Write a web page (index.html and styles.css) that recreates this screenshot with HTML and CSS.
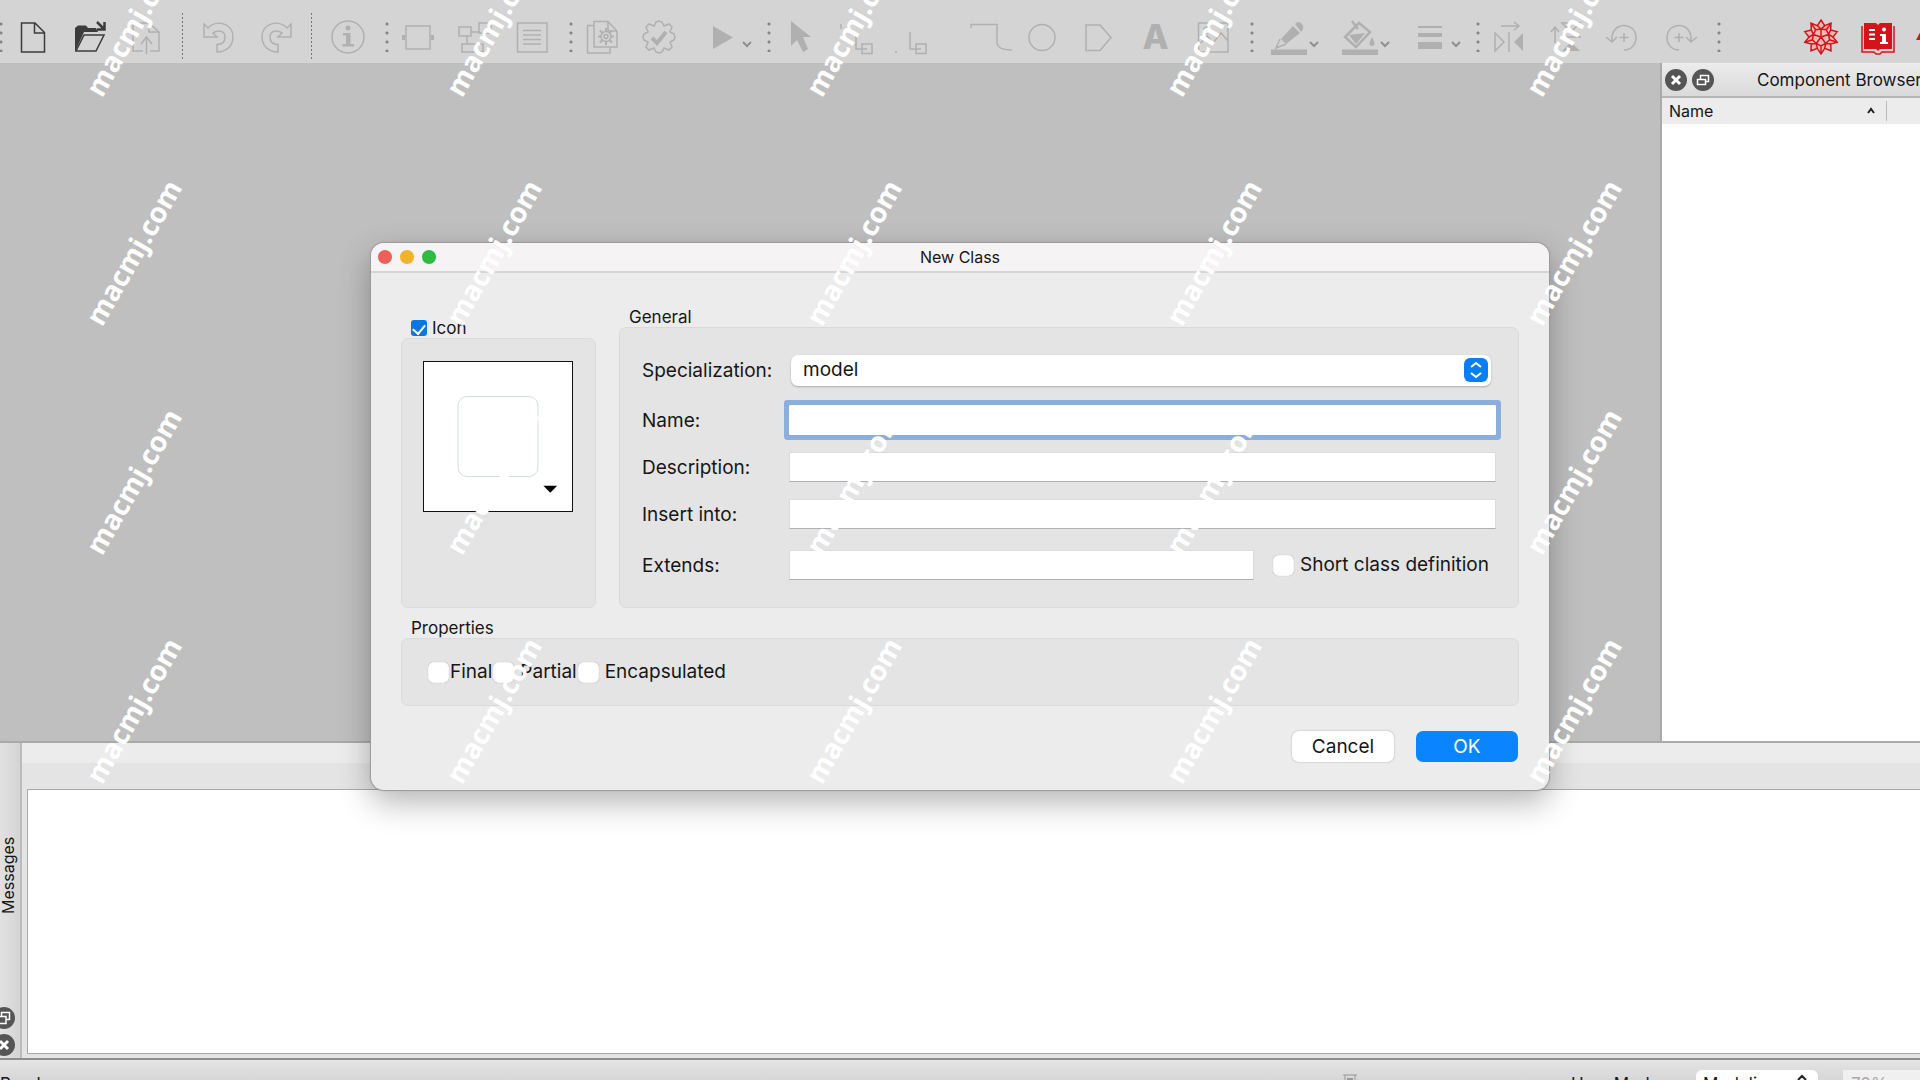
FILE: index.html
```html
<!DOCTYPE html>
<html lang="en">
<head>
<meta charset="utf-8">
<title>New Class</title>
<link rel="stylesheet" href="styles.css">
</head>
<body>
<div class="app">
  <header class="toolbar" role="toolbar">
    <span class="grip grip-first"></span>
    <button class="tool dark" aria-label="New"><svg viewBox="0 0 40 40"><path d="M8.500 6H22L31.500 15.500V35H8.500ZM21.500 6V16H31"/></svg></button>
    <button class="tool dark" aria-label="Open"><svg viewBox="0 0 40 40"><path class="fill" d="M5 35V11L8 8.500H16L18 11H26L28 15H14Z"/><path d="M14 18H34L26 34H6Z"/><path class="thick" d="M27 5L34 12M34.500 5V12.500H27"/></svg></button>
    <button class="tool" aria-label="Save"><svg viewBox="0 0 40 40"><path d="M16 34H6V6H22L32 15V34H23M22 6V15H32M19.500 37V21M14 27L19.500 20L25 27"/></svg></button>
    <span class="divider"></span>
    <button class="tool" aria-label="Undo"><svg viewBox="0 0 40 40"><path d="M5 7V20H18L14 16C18 13 26 13 26 20C26 25 23 27.500 18 27.500V35C28 35 34 28 34 20C34 6 17 2 9 11Z"/></svg></button>
    <button class="tool" aria-label="Redo"><svg viewBox="0 0 40 40"><path d="M35 7V20H22L26 16C22 13 14 13 14 20C14 25 17 27.500 22 27.500V35C12 35 6 28 6 20C6 6 23 2 31 11Z"/></svg></button>
    <span class="divider"></span>
    <button class="tool" aria-label="Information"><svg viewBox="0 0 40 40"><circle cx="20" cy="20" r="16"/><circle class="fill" cx="20" cy="11" r="2.500"/><path class="fill" d="M15 16H22.500V27H26V29.500H14.500V27H18V18.500H15Z"/></svg></button>
    <span class="grip"></span>
    <button class="tool" aria-label="Icon view"><svg viewBox="0 0 40 40"><path d="M8 9H32V32H8Z"/><path class="fill" d="M4 18H7V23H4ZM33 18H36V23H33Z"/></svg></button>
    <button class="tool" aria-label="Diagram view"><svg viewBox="0 0 40 40"><path d="M4 10H16V19H4ZM24 6H36V16H24ZM7 27H28V35H7ZM16 15H24M12 19V27"/></svg></button>
    <button class="tool" aria-label="Text view"><svg viewBox="0 0 40 40"><path d="M5.500 6H35V35H5.500ZM11 13.500H29M11 18H29M11 22.500H29M11 27H29"/></svg></button>
    <span class="grip"></span>
    <button class="tool" aria-label="Simulation"><svg viewBox="0 0 40 40"><path d="M12 4.500H26L35 14V30H12ZM26 5V14H35M12 8.500H5.500V36H28V30"/><circle cx="24" cy="19.500" r="5"/><circle cx="24" cy="19.500" r="2"/><path stroke-width="2" d="M24 11V14M24 25V28M16 19.500H19M29 19.500H32M18 13.500L20.500 16M27.500 23L30 25.500M30 13.500L27.500 16M20.500 23L18 25.500"/></svg></button>
    <button class="tool" aria-label="Validate"><svg viewBox="0 0 40 40"><path d="M20 4L23 5L25 9L30 7L33 10L31 15L35 17L36 20L35 23L31 25L33 30L30 33L25 31L23 35L20 36L17 35L15 31L10 33L7 30L9 25L5 23L4 20L5 17L9 15L7 10L10 7L15 9L17 5Z"/><path class="heavy" d="M13 21L18 26L27 15"/></svg></button>
    <button class="tool with-menu" aria-label="Simulate"><svg viewBox="0 0 40 40"><path class="fill" d="M10 9L30 20.500L10 32Z"/></svg><svg class="chev" viewBox="0 0 12 12"><path d="M2 4L6 8L10 4"/></svg></button>
    <span class="grip"></span>
    <button class="tool" aria-label="Select"><svg viewBox="0 0 40 40"><path class="fill" d="M11 4L31 20H23L28 32L23 35L17 23L11 29Z"/></svg></button>
    <button class="tool" aria-label="Connect"><svg viewBox="0 0 40 40"><path d="M4 7V12M19 15V32H30M25 27H35V36.500H25Z"/></svg></button>
    <button class="tool" aria-label="Transition"><svg viewBox="0 0 40 40"><path d="M16 15V32H27M22 27H32V36.500H22ZM2 34V36"/></svg></button>
    <button class="tool tool-group" aria-label="Line"><svg viewBox="0 0 40 40"><path d="M6 11V7.500H32V26Q33 33 47 33"/></svg></button>
    <button class="tool" aria-label="Ellipse"><svg viewBox="0 0 40 40"><circle cx="20" cy="20.500" r="13"/></svg></button>
    <button class="tool" aria-label="Polygon"><svg viewBox="0 0 40 40"><path d="M7 8H21L32 20.500L21 33.500H7Z"/></svg></button>
    <button class="tool letter" aria-label="Text">A</button>
    <button class="tool" aria-label="Image"><svg viewBox="0 0 40 40"><path d="M5.500 6H35V35H5.500ZM6 28L14 19L20 26L28 16L35 24"/><circle cx="14" cy="13" r="3"/></svg></button>
    <span class="grip"></span>
    <button class="tool with-menu" aria-label="Line color"><svg viewBox="0 0 40 40"><path class="fill" d="M1 32.500H37V38H1ZM23 9L30 16L16 27L11 22ZM25 7Q28 3 32 7Q35 11 31 15Z"/><path d="M10 22L6 31L16 27"/></svg><svg class="chev" viewBox="0 0 12 12"><path d="M2 4L6 8L10 4"/></svg></button>
    <button class="tool with-menu" aria-label="Fill color"><svg viewBox="0 0 40 40"><path class="fill" d="M1 32.500H37V38H1ZM8 18L24 16L15 27ZM31 20Q36 29 31 29Q26 29 31 20Z"/><path class="thick" d="M18 6L29 15L15 30L4 20ZM11 4L17 12"/></svg><svg class="chev" viewBox="0 0 12 12"><path d="M2 4L6 8L10 4"/></svg></button>
    <button class="tool with-menu" aria-label="Line width"><svg viewBox="0 0 40 40"><path class="fill" d="M6 9H30V11H6ZM6 16H30V20H6ZM6 25H30V32H6Z"/></svg><svg class="chev" viewBox="0 0 12 12"><path d="M2 4L6 8L10 4"/></svg></button>
    <span class="grip"></span>
    <button class="tool" aria-label="Flip horizontal"><svg viewBox="0 0 40 40"><path d="M12 9H29M25 5L30 9L25 13M6 16V34L15 25ZM20 15V35"/><path class="fill" d="M34 16V34L25 25Z"/></svg></button>
    <button class="tool" aria-label="Flip vertical"><svg viewBox="0 0 40 40"><path d="M9 26V11M5 15L9 10L13 15M16 6H34L25 15ZM15 20H35"/><path class="fill" d="M16 34H34L25 25Z"/></svg></button>
    <button class="tool" aria-label="Rotate left"><svg viewBox="0 0 40 40"><path d="M9 24C7 4 33 4 33 20.500C33 28 28 33 21 33M3 20L9 25L14 20M21 16V25M16.500 20.500H25.500"/></svg></button>
    <button class="tool" aria-label="Rotate right"><svg viewBox="0 0 40 40"><path d="M31 24C33 4 7 4 7 20.500C7 28 12 33 19 33M37 20L31 25L26 20M19 16V25M14.500 20.500H23.500"/></svg></button>
    <span class="grip"></span>
    <button class="tool brand" aria-label="Wolfram"><svg viewBox="0 0 40 40"><path class="pale" d="M20 3L23.700 8.600L30 6.200L29.700 12.900L36.200 14.700L32 20L36.200 25.300L29.700 27.100L30 33.800L23.700 31.400L20 37L16.300 31.400L10 33.800L10.300 27.100L3.800 25.300L8 20L3.800 14.700L10.300 12.900L10 6.200L16.300 8.600Z"/><path d="M16.300 8.600L20 12L23.700 8.600M29.700 12.900L27.600 17.500L32 20M29.700 27.100L24.700 26.500L23.700 31.400M16.300 31.400L15.300 26.500L10.300 27.100M8 20L12.400 17.500L10.300 12.900M20 12L25.300 12.700L27.600 17.500L28.600 22.800L24.700 26.500L20 29L15.300 26.500L11.400 22.800L12.400 17.500L14.700 12.700ZM20 20V12M20 20L27.600 17.500M20 20L24.700 26.500M20 20L15.300 26.500M20 20L12.400 17.500M25.300 12.700L30 6.200M28.600 22.800L36.200 25.300M20 29V37M11.400 22.800L3.800 25.300M14.700 12.700L10 6.200"/></svg></button>
    <button class="tool brand" aria-label="Documentation"><svg viewBox="0 0 40 40"><path class="fill" d="M6 6H18L20 8L22 6H34V32H22L20 34L18 32H6Z"/><path d="M4 9V35H16L18 37H22L24 35H36V9"/><path class="light" d="M11 13H17M11 17.500H17M11 22H17"/><path class="white" d="M22 17H28V25H30V27H22V25H24V19H22Z"/><circle class="white" cx="26" cy="12.500" r="2"/></svg></button>
    <button class="tool brand" aria-label="Support"><svg viewBox="0 0 40 40"><path class="fill" d="M8 10L1 23H12L8 34L30 16H18L24 6Z"/></svg></button>
  </header>

  <main class="workspace">
    <section class="canvas"></section>
    <aside class="browser">
      <div class="dock-title">
        <button class="round" aria-label="Close"><svg viewBox="0 0 22 22"><path class="cross" d="M7 7L15 15M15 7L7 15"/></svg></button>
        <button class="round" aria-label="Detach"><svg viewBox="0 0 22 22"><path d="M5.500 10.500H13.500V15.500H5.500ZM8.500 10V6.500H16.500V12.500H14"/></svg></button>
        <h2>Component Browser</h2>
      </div>
      <div class="columns"><span>Name</span><svg class="sort" viewBox="0 0 12 12"><path d="M3 8L6 4L9 8"/></svg></div>
    </aside>
  </main>

  <section class="messages">
    <div class="side-title">
      <h2>Messages</h2>
      <div class="side-buttons">
        <button class="round" aria-label="Detach messages"><svg viewBox="0 0 22 22"><path d="M8.500 5.500H16.500V12.500H13V16.500H5.500V9.500H8.500ZM8.500 9.500H13V12.500"/></svg></button>
        <button class="round" aria-label="Close messages"><svg viewBox="0 0 22 22"><path class="cross" d="M7 7L15 15M15 7L7 15"/></svg></button>
      </div>
    </div>
    <div class="pane"><div class="log"></div></div>
  </section>

  <footer class="status">
    <span class="status-text">Ready</span>
    <svg class="timer" viewBox="0 0 16 20"><path d="M1 1H15M3 1V8L8 11L13 8V1"/><path class="sand" d="M5 4H11V7L8 9L5 7Z"/></svg>
    <label class="mode-label" for="mode">User Mode:</label>
    <div class="mode-wrap"><select id="mode"><option>Modeling</option></select><svg class="mode-arrows" viewBox="0 0 12 20"><path d="M2 6L6 2L10 6M2 12L6 16L10 12"/></svg></div>
    <input class="zoom" aria-label="Zoom" value="70%" disabled>
  </footer>
</div>

<div class="overlay">
  <form class="dialog" role="dialog" aria-labelledby="dialog-title">
    <div class="titlebar">
      <div class="lights"><button type="button" class="light-red" aria-label="Close"></button><button type="button" class="light-yellow" aria-label="Minimize"></button><button type="button" class="light-green" aria-label="Zoom"></button></div>
      <h1 id="dialog-title">New Class</h1>
    </div>
    <div class="content">
      <div class="groups">
        <section class="icon-group">
          <label class="caption check-caption"><input type="checkbox" class="tick" checked>Icon</label>
          <div class="box icon-box">
            <button type="button" class="picker" aria-label="Choose icon"><svg viewBox="0 0 150 150"><rect x="34.500" y="34.500" width="81" height="81" rx="9"/><path d="M121 125H135L128 132Z"/></svg></button>
          </div>
        </section>
        <section class="general-group">
          <h3 class="caption">General</h3>
          <div class="box fields">
            <label for="spec">Specialization:</label>
            <div class="select-wrap"><select id="spec"><option>model</option></select><span class="stepper"><svg viewBox="0 0 24 24"><path d="M7 9L12 5L17 9M7 15L12 19L17 15"/></svg></span></div>
            <label for="name">Name:</label><input id="name" class="text focused" type="text">
            <label for="desc">Description:</label><input id="desc" class="text" type="text">
            <label for="into">Insert into:</label><input id="into" class="text" type="text">
            <label for="ext">Extends:</label>
            <div class="extends"><input id="ext" class="text" type="text"><label class="option"><input type="checkbox" class="tick-box">Short class definition</label></div>
          </div>
        </section>
      </div>
      <section class="properties">
        <h3 class="caption">Properties</h3>
        <div class="box options">
          <label class="option tight"><input type="checkbox" class="tick-box">Final</label>
          <label class="option"><input type="checkbox" class="tick-box">Partial</label>
          <label class="option"><input type="checkbox" class="tick-box">Encapsulated</label>
        </div>
      </section>
      <div class="actions"><button type="button" class="btn">Cancel</button><button type="button" class="btn primary">OK</button></div>
    </div>
  </form>
</div>

<div class="watermarks" aria-hidden="true">
  <span>macmj.com</span><span>macmj.com</span><span>macmj.com</span><span>macmj.com</span><span>macmj.com</span>
  <span>macmj.com</span><span>macmj.com</span><span>macmj.com</span><span>macmj.com</span><span>macmj.com</span>
  <span>macmj.com</span><span>macmj.com</span><span>macmj.com</span><span>macmj.com</span><span>macmj.com</span>
  <span>macmj.com</span><span>macmj.com</span><span>macmj.com</span><span>macmj.com</span><span>macmj.com</span>
</div>
</body>
</html>
```
FILE: styles.css
```css
* { box-sizing: border-box; }
body { margin: 0; height: 100vh; overflow: hidden; position: relative; font: 19px/24px Inter, "Liberation Sans", sans-serif; color: #161616; }
h1, h2, h3 { margin: 0; font-weight: 400; }
button { border: 0; padding: 0; background: none; font: inherit; color: inherit; }
svg { display: block; fill: none; }

/* the status bar runs past the lower window edge */
.app { height: calc(100vh + 18px); display: flex; flex-direction: column; background: #ececec; overflow: hidden; }

.toolbar { flex: none; height: 63px; padding-top: 11px; display: flex; background: #d4d4d4; overflow: hidden; }
.tool { flex: none; width: 57px; display: flex; align-items: center; justify-content: center; color: #b0b0b0; }
.tool svg { width: 40px; height: 40px; overflow: visible; stroke: currentColor; stroke-width: 1.500; }
.tool .fill { fill: currentColor; stroke: none; }
.tool .thick { stroke-width: 2.500; }
.tool .heavy { stroke-width: 4; }
.tool.dark { color: #3c3c3c; }
.tool-group { margin-left: 14px; }
.tool.letter { font-size: 34px; font-weight: 800; }
.with-menu { width: 71px; justify-content: flex-start; padding-left: 16px; }
.tool .chev { width: 12px; height: 12px; margin: 14px 0 0 -2px; color: #909090; stroke-width: 2; }
.grip { flex: none; width: 13px; margin: 11px 0; background: radial-gradient(circle at 11px 4px, #868686 1px, transparent 2px) 0 -2px / 13px 9px; }
.grip-first { width: 4px; background-position: -10px -2px; }
.divider { flex: none; width: 15px; padding: 2px 7px; background: repeating-linear-gradient(#777 0 2px, transparent 2px 4px) content-box; }
.brand { color: #d4141a; }
.brand svg { stroke-width: 1.500; }
.grip + .brand { margin-left: 71px; }
.brand .pale { fill: #f3b9b7; }
.brand .light { stroke: #fff; stroke-width: 2; }
.brand .white { fill: #fff; stroke: none; }

.workspace { flex: 1; display: flex; border-bottom: 2px solid #a9a9a9; }
.canvas { flex: 1; background: #bfbfbf; }
.browser { flex: 0 0 260px; background: #fff; border-left: 2px solid #aaa; overflow: hidden; }
.dock-title { height: 35px; padding-left: 3px; display: flex; align-items: center; gap: 5px; background: linear-gradient(#ececec, #dadada); border-bottom: 2px solid #b5b5b5; white-space: nowrap; }
.dock-title h2 { margin-left: 38px; font-size: 17px; }
.round { flex: none; width: 22px; height: 22px; border-radius: 50%; background: #555; }
.round svg { stroke: #fff; stroke-width: 1.500; }
.round .cross { stroke-width: 3; }
.columns { height: 26px; padding-left: 7px; display: flex; align-items: center; background: linear-gradient(#bbb, #bbb) 224px 3px / 1px 20px no-repeat #ececec; font-size: 16px; }
.sort { width: 12px; height: 12px; margin-left: auto; margin-right: 43px; stroke: #222; stroke-width: 2; }

.messages { flex: 0 0 315px; display: flex; }
.side-title { flex: none; width: 29px; margin-left: -7px; padding-bottom: 2px; display: flex; flex-direction: column; align-items: flex-start; background: linear-gradient(90deg, #e6e6e6, #d4d4d4); border-right: 2px solid #bbb; }
.side-title h2 { flex: 1; margin-left: 3px; writing-mode: vertical-rl; transform: rotate(180deg); text-align: center; font-size: 16px; }
.side-buttons { display: flex; flex-direction: column; gap: 5px; }
.pane { flex: 1; display: flex; padding: 26px 0 4px 5px; margin-top: 20px; background: #e4e4e4; }
.log { flex: 1; background: #fff; border: 1px solid #aaa; border-right: 0; }

.status { flex: none; height: 40px; padding-top: 10px; display: flex; border-top: 2px solid #8d8d8d; background: linear-gradient(#e4e4e4, #cacaca); font-size: 17px; }
.status-text { flex: 1; padding-top: 2px; }
.timer { flex: none; width: 16px; height: 20px; margin: 4px 213px 0 0; stroke: #999; }
.timer .sand { fill: #999; stroke: none; }
.mode-label { flex: none; width: 125px; padding-top: 2px; }
.mode-wrap { flex: none; position: relative; width: 122px; }
#mode { display: block; width: 100%; height: 28px; appearance: none; border: 0; border-radius: 6px; background: #fff; padding: 0 7px; font: inherit; color: inherit; }
.mode-arrows { position: absolute; right: 10px; top: 4px; width: 12px; height: 20px; stroke: #222; stroke-width: 2; }
.zoom { flex: none; width: 77px; margin-left: 25px; height: 28px; padding: 0 8px; border: 0; background: #f0f0f0; color: #aaa; font: inherit; }

.overlay { position: absolute; inset: 0; display: flex; justify-content: center; align-items: flex-start; padding-top: 243px; }
.dialog { width: 1178px; max-width: 96%; border-radius: 13px; background: #ececec; box-shadow: 0 0 1px 1px #999, 0 12px 32px rgba(0, 0, 0, .3); overflow: hidden; }
.titlebar { height: 30px; display: flex; align-items: center; justify-content: center; position: relative; background: #f5f3f4; border-bottom: 2px solid #d6d6d6; }
.titlebar h1 { font-size: 16px; }
.lights { position: absolute; left: 7px; top: 7px; display: flex; gap: 8px; }
.lights button { width: 14px; height: 14px; border-radius: 50%; }
.light-red { background: #ed5f57; }
.light-yellow { background: #f0b429; }
.light-green { background: #2dbb41; }

.content { padding: 32px 30px 28px; }
.groups { display: flex; gap: 23px; }
.icon-group { flex: 0 0 195px; display: flex; flex-direction: column; padding-top: 11px; }
.general-group { flex: 1; }
.caption { display: flex; align-items: center; height: 22px; padding: 2px 0 0 10px; font-size: 17px; }
.check-caption { gap: 5px; }
.tick { appearance: none; margin: 0; width: 16px; height: 16px; border-radius: 3px; background: #0b76df; display: flex; justify-content: center; }
.tick::before { content: ""; width: 6px; height: 10px; margin-top: 2px; border: solid #fff; border-width: 0 2px 2px 0; transform: rotate(40deg); }
.box { border: 1px solid #dadada; border-radius: 7px; background: #e4e4e4; }
.icon-box { flex: 1; padding: 22px 21px; }
.picker { width: 150px; height: 151px; border: 1px solid #111; background: #fff; }
.picker svg { width: 100%; height: 100%; }
.picker rect { stroke: #d3dbe0; stroke-width: 1; }
.picker path { fill: #000; }
.fields { height: 281px; padding: 24px 22px; display: grid; grid-template-columns: 147px 1fr; grid-template-rows: 36px 30px 30px 30px 38px; row-gap: 17px; align-items: center; }
.fields > label { padding-top: 2px; }
.text { width: 100%; height: 30px; border: 1px solid #dcdcdc; border-bottom-color: #b0b0b0; background: #fff; outline: 0; font: inherit; padding: 0 6px; }
.focused { border-color: #fff; border-radius: 1px; box-shadow: 0 0 0 5px #8baedb; }
.select-wrap { position: relative; margin: 0 5px 0 2px; }
#spec { display: block; width: 100%; height: 31px; appearance: none; border: 0; border-radius: 7px; background: #fff; box-shadow: 0 1px 2px rgba(0, 0, 0, .25); padding: 0 12px; font: inherit; color: inherit; }
.stepper { position: absolute; right: 3px; top: 3px; width: 24px; height: 24px; border-radius: 6px; background: #0a7ff5; }
.stepper svg { stroke: #fff; stroke-width: 2; }
.extends { display: flex; align-items: center; gap: 19px; }
.extends .text { flex: 1; }
.option { display: flex; align-items: center; gap: 6px; white-space: nowrap; }
.extends .option { margin-right: 7px; }
.tick-box { appearance: none; margin: 0; width: 21px; height: 21px; border-radius: 5px; background: #fff; box-shadow: inset 0 0 1px #999, 0 0 1px #bbb; }
.properties { margin-top: 8px; }
.options { height: 68px; display: flex; align-items: center; gap: 1px; padding: 0 26px; }
.tight { gap: 1px; }
.actions { margin-top: 25px; display: flex; justify-content: flex-end; gap: 22px; padding-right: 1px; }
.btn { width: 102px; height: 31px; border-radius: 7px; background: #fff; box-shadow: 0 0 2px #aaa; }
.primary { background: #0a84ff; color: #fff; box-shadow: none; }

.watermarks { position: absolute; left: -47px; top: -92px; width: 1800px; display: grid; grid-template-columns: repeat(5, 1fr); grid-auto-rows: 229px; pointer-events: none; color: #fff; font: 700 28px/30px "Open Sans", sans-serif; }
.watermarks span { place-self: center; transform: rotate(-60deg); }
```
